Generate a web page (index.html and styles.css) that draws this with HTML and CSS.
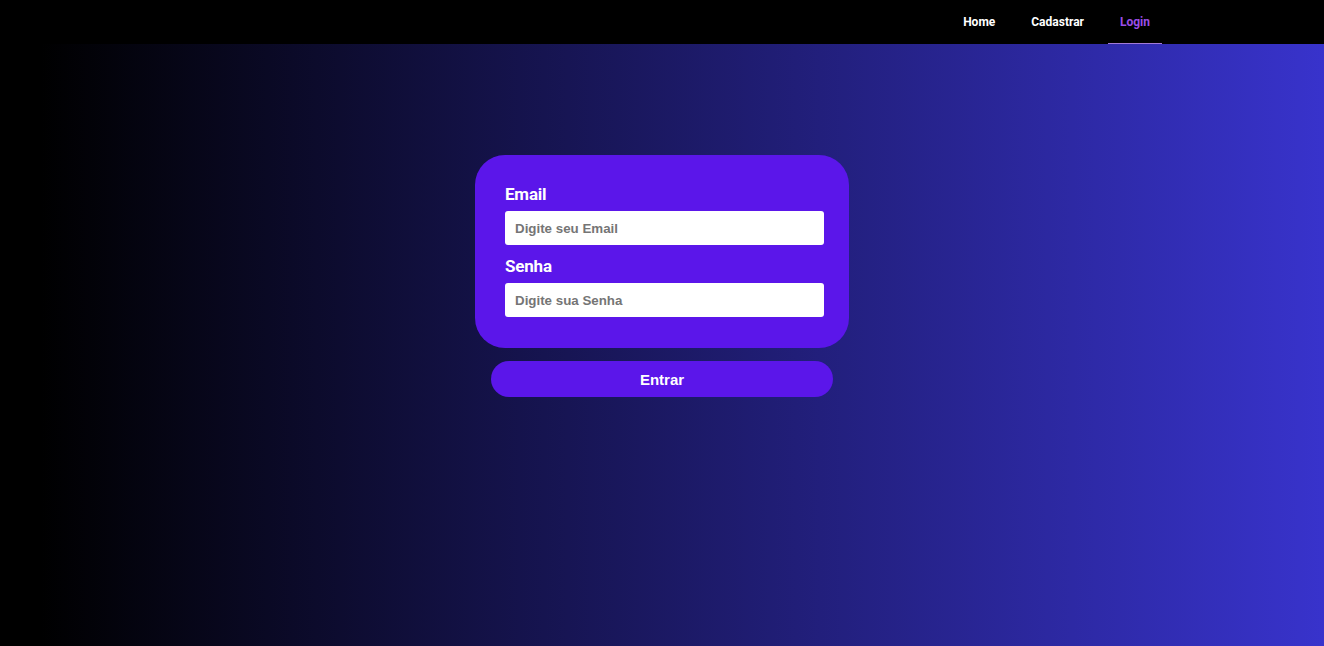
FILE: index.html
```html
<!DOCTYPE html>
<html lang="pt-BR">
<head>
<meta charset="utf-8">
<title>Login</title>
<link rel="stylesheet" href="styles.css">
</head>
<body>
<header class="navbar">
  <nav class="nav">
    <a class="nav-link" href="#">Home</a>
    <a class="nav-link" href="#">Cadastrar</a>
    <a class="nav-link active" href="#">Login</a>
  </nav>
</header>
<main class="main">
  <form class="login">
    <div class="card">
      <label class="label" for="email">Email</label>
      <input class="input" id="email" type="email" placeholder="Digite seu Email">
      <label class="label" for="senha">Senha</label>
      <input class="input last" id="senha" type="password" placeholder="Digite sua Senha">
    </div>
    <button class="btn" type="button">Entrar</button>
  </form>
</main>
</body>
</html>
```
FILE: styles.css
```css
* { box-sizing: border-box; }
html, body { height: 100%; }
body {
  margin: 0;
  font-family: Roboto, "Liberation Sans", sans-serif;
  background: linear-gradient(90deg, #000 0%, #000 3%, #3833cc 100%);
  display: flex;
  flex-direction: column;
}
.navbar {
  height: 44px;
  background: #000;
  display: flex;
  justify-content: flex-end;
  padding-right: 162px;
}
.nav {
  display: flex;
  gap: 12px;
  height: 44px;
}
.nav-link {
  display: flex;
  align-items: center;
  padding: 0 12px;
  color: #fff;
  text-decoration: none;
  font-weight: 700;
  font-size: 12px;
  height: 44px;
  border-bottom: 1px solid transparent;
}
.nav-link.active {
  color: #9b4de8;
  border-bottom-color: #a27ad8;
}
.main {
  flex: 1;
  display: flex;
  justify-content: center;
  padding-top: 111px;
}
.login {
  display: flex;
  flex-direction: column;
  align-items: center;
  width: 374px;
}
.card {
  width: 374px;
  background: #5b16ea;
  border-radius: 30px;
  padding: 29px 25px 31px 30px;
  display: flex;
  flex-direction: column;
}
.label {
  color: #fff;
  font-weight: 700;
  font-size: 17px;
  line-height: 20px;
  margin-bottom: 7px;
  letter-spacing: -0.2px;
}
.input {
  width: 319px;
  height: 34px;
  border: none;
  border-radius: 3px;
  background: #fff;
  padding: 0 10px;
  font-family: "Liberation Sans", Arial, sans-serif;
  font-weight: 700;
  font-size: 13.33px;
  color: #333;
  margin-bottom: 11px;
  outline: none;
}
.input.last { margin-bottom: 0; }
.input::placeholder { color: #757575; }
.btn {
  margin-top: 13px;
  width: 342px;
  height: 36px;
  border: none;
  border-radius: 18px;
  background: #5b16ea;
  color: #fff;
  font-family: "Liberation Sans", Arial, sans-serif;
  font-weight: 700;
  font-size: 15px;
  cursor: pointer;
}
```
